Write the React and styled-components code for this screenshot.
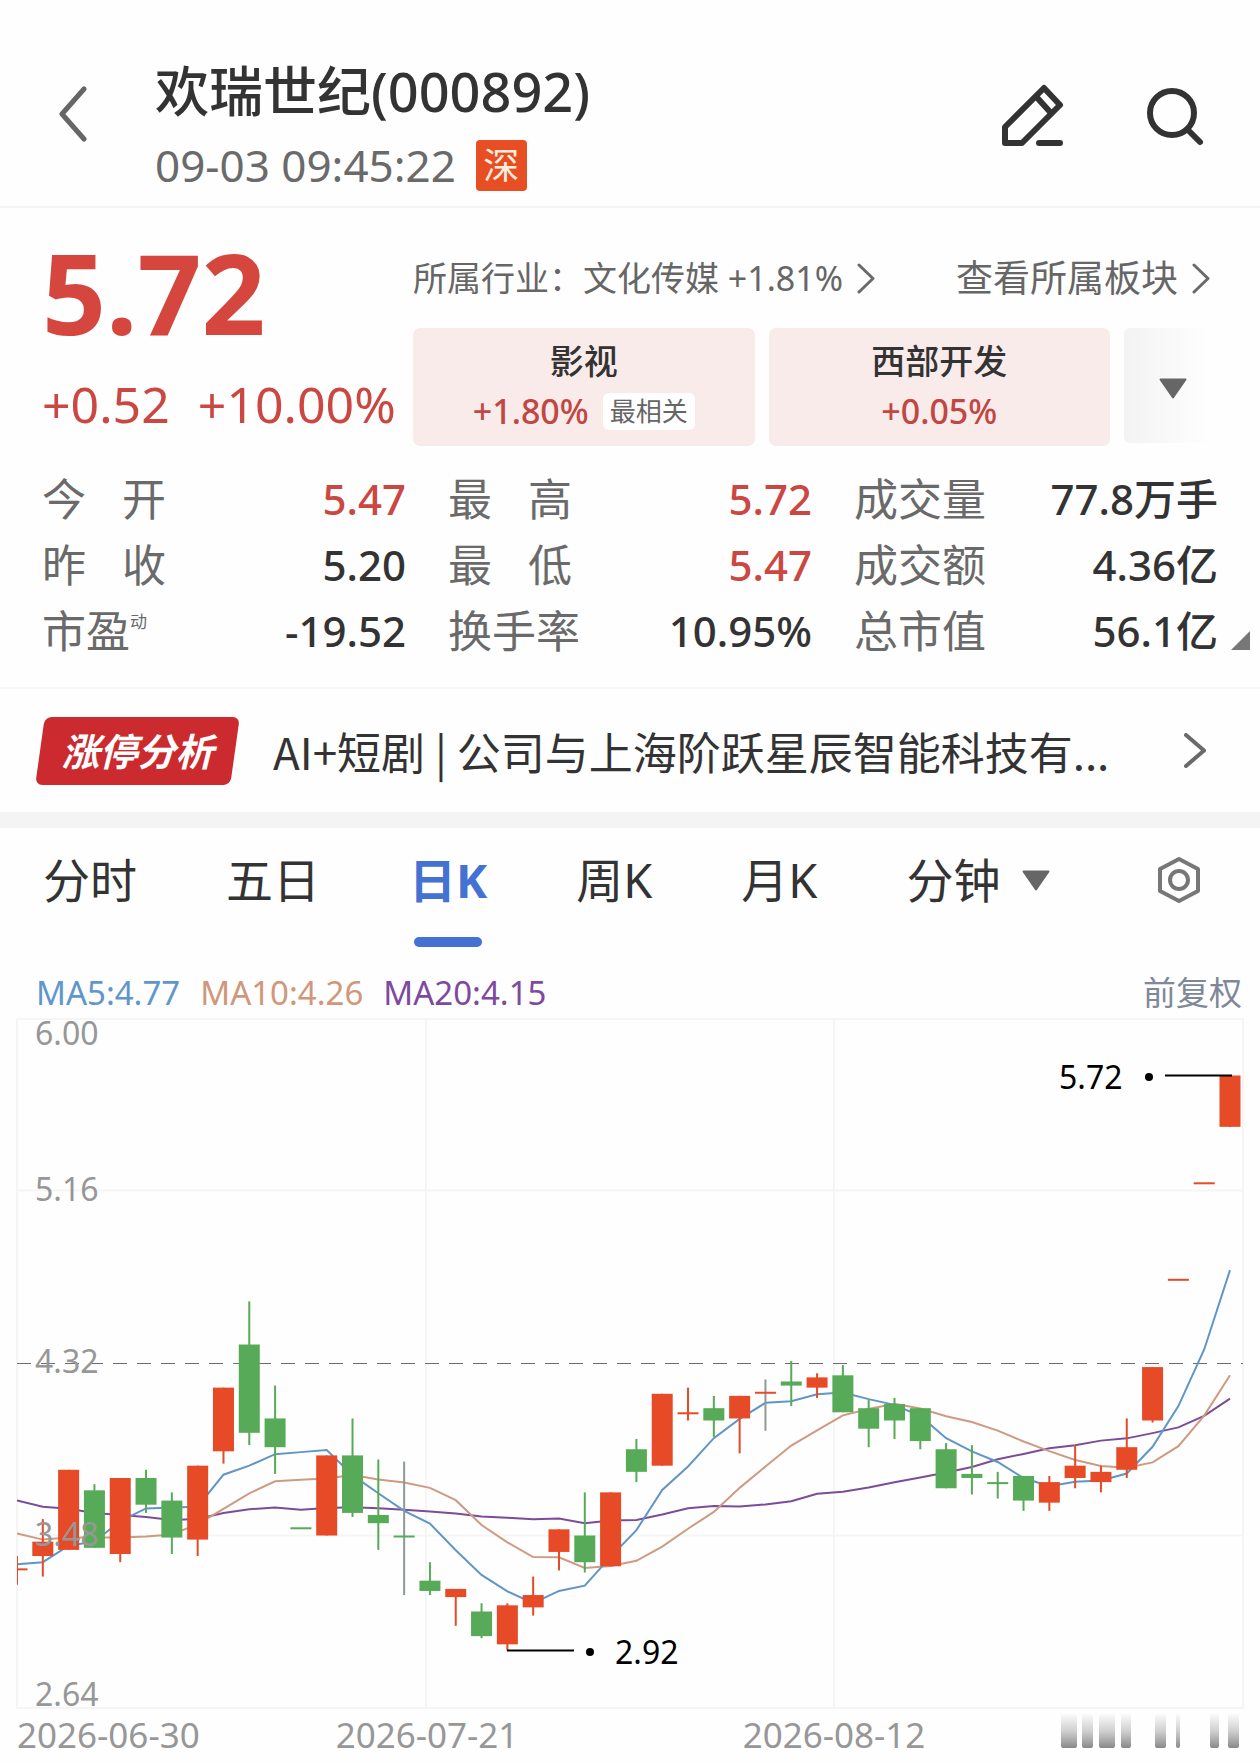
import React from "react"

import styled, { createGlobalStyle, css } from "styled-components"

const GlobalStyle = createGlobalStyle`
  * {
    box-sizing: border-box;
  }

  body {
    margin: 0;
    background: #fefefe;
    color: #333;
    font-family: "Noto Sans", "Noto Sans CJK SC", sans-serif;
  }

  button {
    padding: 0;
    border: 0;
    background: none;
    color: inherit;
    font: inherit;
    cursor: pointer;
  }

  a {
    color: inherit;
    text-decoration: none;
  }

  svg {
    display: block;
    flex: none;
  }
`

const RED = "#cb4742"
const UP = "#e64a26"
const DOWN = "#57aa57"

const Header = styled.header`
  display: flex;
  align-items: flex-start;
  padding: 58px 51px 15px 59px;
  border-bottom: 2px solid #f4f4f4;
`

const IconButton = styled.button`
  display: flex;
  align-items: center;
  height: 116px;
`

const Heading = styled.div`
  flex: 1;
  margin-left: 67px;
`

const Title = styled.h1`
  margin: 0 0 16px;
  font-size: 54px;
  font-weight: 500;
  line-height: 66px;
`

const Timestamp = styled.div`
  display: flex;
  align-items: center;
  gap: 20px;
  color: #6a6a6a;
  font-size: 44px;
  line-height: 51px;
`

const Market = styled.span`
  width: 51px;
  height: 51px;
  border-radius: 4px;
  background: #e84e23;
  color: #ffeedd;
  font-size: 36px;
  text-align: center;
`

const HeaderActions = styled.div`
  display: flex;
  gap: 81px;
`

const Quote = styled.section`
  display: grid;
  grid-template-columns: 371px 1fr;
  padding: 28px 50px 0 42px;
`

const Price = styled.div`
  color: #d5463f;
  font-size: 112px;
  font-weight: 700;
  line-height: 112px;
`

const Change = styled.div`
  display: flex;
  gap: 28px;
  margin-top: 26px;
  color: ${RED};
  font-size: 50px;
  line-height: 60px;
  white-space: nowrap;
`

const Sectors = styled.div`
  padding-top: 22px;
`

const SectorLinks = styled.div`
  display: flex;
  align-items: center;
  justify-content: space-between;
  margin-bottom: 30px;
  color: #666;
  line-height: 40px;
  white-space: nowrap;
`

const SectorLink = styled.a`
  display: flex;
  align-items: center;
  gap: 14px;
  font-size: ${props => (props.$large ? 37 : 34)}px;
`

const SectorCards = styled.div`
  display: grid;
  grid-template-columns: 1fr 1fr 86px;
  gap: 14px;
`

const SectorCard = styled.a`
  padding: 8px 0 10px;
  border-radius: 7px;
  background: #f9ebea;
  font-size: 34px;
  font-weight: 500;
  line-height: 50px;
  text-align: center;
`

const SectorChange = styled.div`
  display: flex;
  align-items: center;
  justify-content: center;
  gap: 14px;
  color: #bf4744;
`

const Tag = styled.span`
  padding: 0 7px;
  border-radius: 6px;
  background: #fff;
  color: #666;
  font-size: 26px;
  font-weight: 400;
  line-height: 37px;
`

const MoreButton = styled.button`
  display: flex;
  align-items: center;
  justify-content: center;
  height: 115px;
  padding: 6px 0 0 12px;
  border-radius: 6px;
  background: linear-gradient(90deg, #f3f3f3, #fefefe);
`

const Stats = styled.dl`
  position: relative;
  display: grid;
  grid-template-columns: repeat(3, 1fr);
  column-gap: 42px;
  margin: 0;
  padding: 20px 42px 23px;
  border-bottom: 2px solid #f5f5f5;
`

const Stat = styled.div`
  display: flex;
  justify-content: space-between;
  line-height: 66px;
  white-space: nowrap;
`

const StatLabel = styled.dt`
  display: flex;
  gap: ${props => (props.$spread ? 36 : 0)}px;
  color: #6a6a6a;
  font-size: 44px;

  sup {
    font-size: 17px;
    line-height: 48px;
  }
`

const StatValue = styled.dd`
  margin: 0;
  color: ${props => (props.$up ? RED : "#333")};
  font-size: 42px;
  font-weight: 500;
`

const Corner = styled.svg`
  position: absolute;
  right: 10px;
  bottom: 37px;
`

const Analysis = styled.a`
  display: flex;
  align-items: center;
  height: 123px;
  padding: 0 54px 0 35px;
`

const AnalysisBadge = styled.span`
  position: relative;
  z-index: 0;
  flex: none;
  width: 205px;
  color: #fff;
  font-size: 38px;
  font-style: italic;
  font-weight: 700;
  line-height: 68px;
  text-align: center;

  &::before {
    content: "";
    position: absolute;
    inset: 0 5px;
    z-index: -1;
    border-radius: 7px;
    background: #cb2a2f;
    transform: skewX(-8deg);
  }
`

const AnalysisText = styled.span`
  flex: 1;
  margin: 0 40px 0 33px;
  overflow: hidden;
  font-family: "Noto Sans CJK SC", sans-serif;
  font-size: 44px;
  line-height: 66px;
  text-overflow: ellipsis;
  white-space: nowrap;
`

const Band = styled.div`
  height: 16px;
  background: #f4f4f4;
`

const Tabs = styled.nav`
  display: flex;
  align-items: flex-start;
  gap: 89px;
  height: 119px;
  padding: 0 59px 0 43px;
`

const Tab = styled.button`
  position: relative;
  display: flex;
  align-items: center;
  gap: 22px;
  font-size: 47px;
  line-height: 104px;
  white-space: nowrap;

  ${props =>
    props.$active &&
    css`
      color: #4472d2;
      font-weight: 700;

      &::after {
        content: "";
        position: absolute;
        bottom: -15px;
        left: calc(50% - 34px);
        width: 68px;
        height: 10px;
        border-radius: 5px;
        background: #4472d2;
      }
    `}
`

const Settings = styled.button`
  display: flex;
  align-items: center;
  height: 104px;
  margin-left: auto;
`

const Legend = styled.div`
  display: flex;
  gap: 20px;
  margin-top: 21px;
  padding: 0 18px 0 36px;
  font-size: 33px;
  line-height: 50px;
`

const LegendItem = styled.span`
  color: ${props => props.$color};
`

const Adjust = styled.button`
  margin-left: auto;
  color: #7f8898;
`

const Chart = styled.svg`
  width: 100%;
  height: auto;
  overflow: visible;
  font-size: 32px;
`

const stats = [
  { label: "今开", value: "5.47", up: true },
  { label: "最高", value: "5.72", up: true },
  { label: "成交量", value: "77.8万手" },
  { label: "昨收", value: "5.20" },
  { label: "最低", value: "5.47", up: true },
  { label: "成交额", value: "4.36亿" },
  { label: "市盈", note: "动", value: "-19.52" },
  { label: "换手率", value: "10.95%" },
  { label: "总市值", value: "56.1亿" },
]

// open, close, high, low
const candles = [
  [3.32, 3.32, 3.38, 3.24],
  [3.38, 3.45, 3.56, 3.28],
  [3.41, 3.8, 3.8, 3.41],
  [3.7, 3.42, 3.73, 3.42],
  [3.39, 3.76, 3.76, 3.35],
  [3.76, 3.63, 3.8, 3.59],
  [3.65, 3.47, 3.69, 3.39],
  [3.46, 3.82, 3.82, 3.38],
  [3.89, 4.2, 4.2, 3.83],
  [4.41, 3.98, 4.62, 3.92],
  [4.05, 3.91, 4.21, 3.78],
  [3.52, 3.52, 3.52, 3.52],
  [3.48, 3.87, 3.87, 3.48],
  [3.87, 3.59, 4.05, 3.57],
  [3.58, 3.54, 3.85, 3.41],
  [3.48, 3.48, 3.84, 3.19],
  [3.26, 3.21, 3.35, 3.19],
  [3.18, 3.22, 3.22, 3.04],
  [3.11, 2.99, 3.15, 2.98],
  [2.95, 3.14, 3.15, 2.92],
  [3.13, 3.19, 3.28, 3.09],
  [3.4, 3.51, 3.51, 3.31],
  [3.48, 3.35, 3.69, 3.3],
  [3.33, 3.69, 3.69, 3.33],
  [3.9, 3.79, 3.95, 3.74],
  [3.82, 4.17, 4.17, 3.82],
  [4.08, 4.08, 4.2, 4.04],
  [4.1, 4.04, 4.16, 3.96],
  [4.05, 4.16, 4.16, 3.88],
  [4.18, 4.18, 4.24, 3.99],
  [4.23, 4.21, 4.33, 4.11],
  [4.2, 4.25, 4.27, 4.15],
  [4.26, 4.08, 4.31, 4.08],
  [4.1, 4.0, 4.14, 3.91],
  [4.12, 4.04, 4.15, 3.95],
  [4.1, 3.94, 4.1, 3.9],
  [3.9, 3.71, 3.93, 3.71],
  [3.78, 3.76, 3.92, 3.68],
  [3.74, 3.74, 3.79, 3.66],
  [3.77, 3.65, 3.77, 3.6],
  [3.64, 3.74, 3.77, 3.6],
  [3.76, 3.82, 3.92, 3.71],
  [3.74, 3.79, 3.82, 3.69],
  [3.8, 3.91, 4.05, 3.76],
  [4.04, 4.3, 4.3, 4.03],
  [4.73, 4.73, 4.73, 4.73],
  [5.2, 5.2, 5.2, 5.2],
  [5.47, 5.72, 5.72, 5.47],
]

// head holds the averages that need closes from before the first candle
const averages = [
  {
    days: 20,
    color: "#7c4c99",
    head: [
      3.65, 3.62, 3.61, 3.59, 3.58, 3.57, 3.556, 3.56, 3.59, 3.608, 3.616,
      3.605, 3.614, 3.618, 3.613, 3.605, 3.597, 3.587, 3.572,
    ],
  },
  {
    days: 10,
    color: "#cd9b82",
    head: [3.49, 3.46, 3.47, 3.47, 3.47, 3.475, 3.485, 3.535, 3.61],
  },
  { days: 5, color: "#6096c6", head: [3.34, 3.35, 3.43, 3.45] },
]

const LEFT = 17
const RIGHT = 1243
const BOTTOM = 690
const STEP = (1230 - LEFT) / (candles.length - 1)

const xOf = index => LEFT + index * STEP
const yOf = price => ((6 - price) / (6 - 2.64)) * BOTTOM

const linePoints = ({ days, head }) =>
  candles
    .map((_, i) => {
      if (i < head.length) return head[i]
      const window = candles.slice(i - days + 1, i + 1)
      return window.reduce((sum, candle) => sum + candle[1], 0) / days
    })
    .map((price, i) => `${xOf(i)},${yOf(price)}`)
    .join(" ")

const isUp = (candle, i) =>
  candle[0] === candle[1]
    ? i === 0 || candle[1] > candles[i - 1][1] || i === 26
    : candle[1] > candle[0]

const Candle = ({ candle, index }) => {
  const [open, close, high, low] = candle
  const color = isUp(candle, index) ? UP : DOWN
  const x = xOf(index)
  const top = yOf(Math.max(open, close))
  const height = Math.max(yOf(Math.min(open, close)) - top, 2)
  // long wicks on a flat candle are drawn in grey
  const wick = open === close && high - low > 0.2 ? "#8f9a96" : color
  return (
    <g>
      <rect
        x={x - 1}
        y={yOf(high)}
        width="2"
        height={yOf(low) - yOf(high)}
        fill={wick}
      />
      <rect x={x - 10.5} y={top} width="21" height={height} fill={color} />
    </g>
  )
}

// [x, width] of the faded bars under the right end of the axis
const fadedBars = [
  [1061, 16],
  [1082, 11],
  [1099, 16],
  [1121, 10],
  [1155, 11],
  [1176, 4],
  [1210, 9],
  [1228, 11],
]

const KLine = () => (
  <Chart viewBox="0 0 1260 745" role="img" aria-label="日K">
    <defs>
      <linearGradient id="fade" x1="0" y1="0" x2="0" y2="1">
        <stop offset="0" stopColor="#999" stopOpacity="0" />
        <stop offset="0.5" stopColor="#999" stopOpacity="0.45" />
        <stop offset="1" stopColor="#888" />
      </linearGradient>
      <clipPath id="plot">
        <rect x={LEFT} y="0" width={RIGHT - LEFT} height={BOTTOM} />
      </clipPath>
    </defs>
    <g stroke="#f5f5f5" strokeWidth="2" fill="none">
      <rect x={LEFT} y="1" width={RIGHT - LEFT} height={BOTTOM - 1} />
      <path d={`M${LEFT} ${yOf(5.16)}H${RIGHT}M${LEFT} ${yOf(3.48)}H${RIGHT}`} />
      <path d={`M426 0V${BOTTOM}M834 0V${BOTTOM}`} />
    </g>
    <path
      d={`M${LEFT} 345.5H${RIGHT}`}
      stroke="#6e6e6e"
      strokeWidth="1"
      strokeDasharray="14 10"
    />
    <g clipPath="url(#plot)">
      {averages.map(average => (
        <polyline
          key={average.days}
          points={linePoints(average)}
          fill="none"
          stroke={average.color}
          strokeWidth="2"
        />
      ))}
      {candles.map((candle, i) => (
        <Candle key={i} candle={candle} index={i} />
      ))}
    </g>
    <g fill="#979797">
      <text x="35" y="27">6.00</text>
      <text x="35" y="183">5.16</text>
      <text x="35" y="355">4.32</text>
      <text x="35" y="528">3.48</text>
      <text x="35" y="688">2.64</text>
    </g>
    <g fill="#979797" fontSize="35">
      <text x="17" y="730">2026-06-30</text>
      <text x="427" y="730" textAnchor="middle">2026-07-21</text>
      <text x="834" y="730" textAnchor="middle">2026-08-12</text>
    </g>
    <g fill="#000">
      <text x="1059" y="71">5.72</text>
      <circle cx="1149" cy="59" r="4" />
      <path d="M1165 57.5H1232" stroke="#000" strokeWidth="2" />
      <text x="615" y="646">2.92</text>
      <circle cx="590" cy="634" r="4" />
      <path d="M507 632.5H574" stroke="#000" strokeWidth="2" />
    </g>
    {fadedBars.map(([x, width]) => (
      <rect key={x} x={x} y="695" width={width} height="35" rx="2" fill="url(#fade)" />
    ))}
  </Chart>
)

const Chevron = ({ width, height, stroke }) => (
  <svg width={width} height={height} viewBox={`0 0 ${width} ${height}`}>
    <path
      d={`M2 2L${width - 2} ${height / 2}L2 ${height - 2}`}
      fill="none"
      stroke="#6a6a6a"
      strokeWidth={stroke}
      strokeLinecap="round"
      strokeLinejoin="round"
    />
  </svg>
)

const Caret = () => (
  <svg width="28" height="21" viewBox="0 0 28 21">
    <path
      d="M1.5 1.5H26.5L14 19.5Z"
      fill="#666"
      stroke="#666"
      strokeWidth="2"
      strokeLinejoin="round"
    />
  </svg>
)

const App = () => (
  <>
    <GlobalStyle />
    <Header>
      <IconButton aria-label="返回">
        <svg width="29" height="64" fill="none" stroke="#666" strokeWidth="5">
          <path d="M25 5L3 30L25 55" strokeLinecap="round" strokeLinejoin="round" />
        </svg>
      </IconButton>
      <Heading>
        <Title>欢瑞世纪(000892)</Title>
        <Timestamp>
          <time>09-03 09:45:22</time>
          <Market>深</Market>
        </Timestamp>
      </Heading>
      <HeaderActions>
        <IconButton aria-label="编辑">
          <svg
            width="64"
            height="64"
            fill="none"
            stroke="#333"
            strokeWidth="6"
            strokeLinecap="round"
            strokeLinejoin="round"
          >
            <path d="M44 4L60 21L22 59H5V43Z" />
            <path d="M36.5 13L51 29" />
            <path d="M39 59H60" />
          </svg>
        </IconButton>
        <IconButton aria-label="搜索">
          <svg
            width="64"
            height="64"
            fill="none"
            stroke="#333"
            strokeWidth="6"
            strokeLinecap="round"
          >
            <circle cx="27" cy="29" r="22" />
            <path d="M43 46L55 58" />
          </svg>
        </IconButton>
      </HeaderActions>
    </Header>

    <Quote>
      <div>
        <Price>5.72</Price>
        <Change>
          <span>+0.52</span>
          <span>+10.00%</span>
        </Change>
      </div>
      <Sectors>
        <SectorLinks>
          <SectorLink href="#industry">
            所属行业：文化传媒 +1.81%
            <Chevron width={18} height={31} stroke={3} />
          </SectorLink>
          <SectorLink href="#sectors" $large>
            查看所属板块
            <Chevron width={18} height={31} stroke={3} />
          </SectorLink>
        </SectorLinks>
        <SectorCards>
          <SectorCard href="#film">
            影视
            <SectorChange>
              +1.80%
              <Tag>最相关</Tag>
            </SectorChange>
          </SectorCard>
          <SectorCard href="#west">
            西部开发
            <SectorChange>+0.05%</SectorChange>
          </SectorCard>
          <MoreButton aria-label="更多">
            <Caret />
          </MoreButton>
        </SectorCards>
      </Sectors>
    </Quote>

    <Stats>
      {stats.map(({ label, note, value, up }) => {
        const spread = label.length === 2 && !note
        return (
          <Stat key={label}>
            <StatLabel $spread={spread}>
              {spread
                ? [...label].map(char => <span key={char}>{char}</span>)
                : label}
              {note && <sup>{note}</sup>}
            </StatLabel>
            <StatValue $up={up}>{value}</StatValue>
          </Stat>
        )
      })}
      <Corner width="19" height="19" aria-hidden="true">
        <path d="M19 0V19H0Z" fill="#777" />
      </Corner>
    </Stats>

    <Analysis href="#analysis">
      <AnalysisBadge>涨停分析</AnalysisBadge>
      <AnalysisText>AI+短剧 | 公司与上海阶跃星辰智能科技有...</AnalysisText>
      <Chevron width={22} height={35} stroke={4} />
    </Analysis>
    <Band />

    <Tabs>
      <Tab>分时</Tab>
      <Tab>五日</Tab>
      <Tab $active>日K</Tab>
      <Tab>周K</Tab>
      <Tab>月K</Tab>
      <Tab>
        分钟
        <Caret />
      </Tab>
      <Settings aria-label="设置">
        <svg width="44" height="48" fill="none" stroke="#777" strokeWidth="4">
          <path d="M22 3L41 13V35L22 45L3 35V13Z" strokeLinejoin="round" />
          <circle cx="22" cy="24" r="9" />
        </svg>
      </Settings>
    </Tabs>

    <Legend>
      <LegendItem $color="#6096cc">MA5:4.77</LegendItem>
      <LegendItem $color="#d0977a">MA10:4.26</LegendItem>
      <LegendItem $color="#7d4a9e">MA20:4.15</LegendItem>
      <Adjust>前复权</Adjust>
    </Legend>
    <KLine />
  </>
)

export default App
